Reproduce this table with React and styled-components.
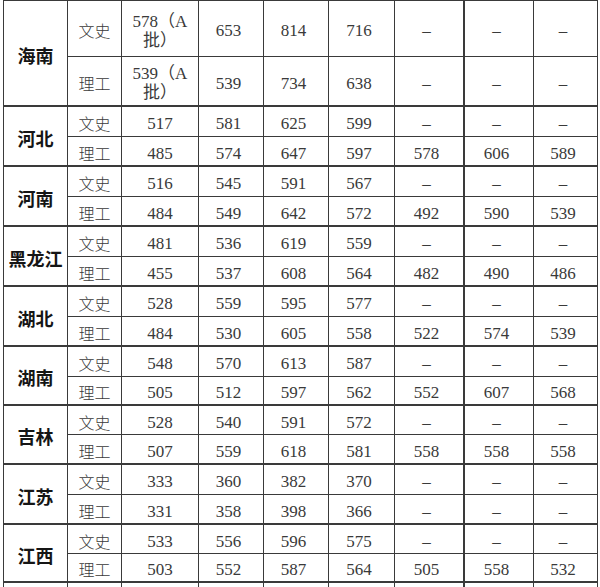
import React from "react";
import styled, { createGlobalStyle } from "styled-components";

const Global = createGlobalStyle`
  html, body { margin: 0; padding: 0; background: #fff; overflow: hidden; }
  body { font-family: "Liberation Serif", "Noto Sans CJK SC", serif; color: #333; }
`;

const LINE = "#3a3a3a";
const COLS = [64, 54, 77, 65, 65, 66, 70, 69, 64];

const Table = styled.table`
  margin-left: 3px;
  width: 595px;
  table-layout: fixed;
  border-collapse: separate;
  border-spacing: 0;
  border-top: 1px solid ${LINE};
  border-left: 1px solid ${LINE};
`;

const Row = styled.tr`
  height: ${(p) => p.$h}px;
`;

const Cell = styled.td`
  box-sizing: border-box;
  padding: 4px ${(p) => (p.$shift ? 5 : 0)}px 0 0;
  text-align: center;
  vertical-align: middle;
  border-right: ${(p) => (p.$thickRight ? 2 : 1)}px solid ${LINE};
  border-bottom: ${(p) => (p.$thickBottom ? 2 : 1)}px solid ${LINE};
  font-family: "Liberation Serif", "Noto Sans CJK SC", serif;
  font-size: 17px;
  line-height: 19px;
  color: #3a3a3a;
  white-space: nowrap;
`;

const ProvinceCell = styled(Cell)`
  font-family: "Noto Sans CJK SC", sans-serif;
  font-weight: 700;
  font-size: 18px;
  color: #151515;
  padding: 4px 0 0 0;
`;

const TypeCell = styled(Cell)`
  font-family: "Noto Sans CJK SC", sans-serif;
  font-weight: 300;
  font-size: 16px;
  color: #3a3a3a;
  padding: 4px 0 0 0;
`;

const D = "–";

const data = [
  ["海南", [["578（A|批）", 653, 814, 716, D, D, D], ["539（A|批）", 539, 734, 638, D, D, D]]],
  ["河北", [[517, 581, 625, 599, D, D, D], [485, 574, 647, 597, 578, 606, 589]]],
  ["河南", [[516, 545, 591, 567, D, D, D], [484, 549, 642, 572, 492, 590, 539]]],
  ["黑龙江", [[481, 536, 619, 559, D, D, D], [455, 537, 608, 564, 482, 490, 486]]],
  ["湖北", [[528, 559, 595, 577, D, D, D], [484, 530, 605, 558, 522, 574, 539]]],
  ["湖南", [[548, 570, 613, 587, D, D, D], [505, 512, 597, 562, 552, 607, 568]]],
  ["吉林", [[528, 540, 591, 572, D, D, D], [507, 559, 618, 581, 558, 558, 558]]],
  ["江苏", [[333, 360, 382, 370, D, D, D], [331, 358, 398, 366, D, D, D]]],
  ["江西", [[533, 556, 596, 575, D, D, D], [503, 552, 587, 564, 505, 558, 532]]],
];

const HEIGHTS = [56, 50, 30, 30, 30, 30, 30, 30, 30, 30, 30, 29, 29, 30, 30, 30, 29, 29];

function Value({ v }) {
  const s = String(v);
  if (s.includes("|")) {
    const [a, b] = s.split("|");
    return (
      <>
        {a}
        <br />
        {b}
      </>
    );
  }
  return s;
}

export default function App() {
  let r = 0;
  return (
    <>
      <Global />
      <Table>
        <colgroup>
          {COLS.map((w, i) => (
            <col key={i} style={{ width: w }} />
          ))}
        </colgroup>
        <tbody>
          {data.map(([prov, rows]) =>
            rows.map((vals, k) => {
              const h = HEIGHTS[r++];
              const last = k === 1;
              return (
                <Row key={prov + k} $h={h}>
                  {k === 0 && (
                    <ProvinceCell rowSpan={2} $thickBottom>
                      {prov}
                    </ProvinceCell>
                  )}
                  <TypeCell $thickBottom={last}>{k === 0 ? "文史" : "理工"}</TypeCell>
                  {vals.map((v, i) => (
                    <Cell
                      key={i}
                      $shift={i > 0}
                      $thickBottom={last}
                      $thickRight={i === 4}
                    >
                      <Value v={v} />
                    </Cell>
                  ))}
                </Row>
              );
            })
          )}
          <Row $h={30}>
            <ProvinceCell />
            <TypeCell />
            {[0, 1, 2, 3, 4, 5, 6].map((i) => (
              <Cell key={i} $thickRight={i === 4} />
            ))}
          </Row>
        </tbody>
      </Table>
    </>
  );
}
